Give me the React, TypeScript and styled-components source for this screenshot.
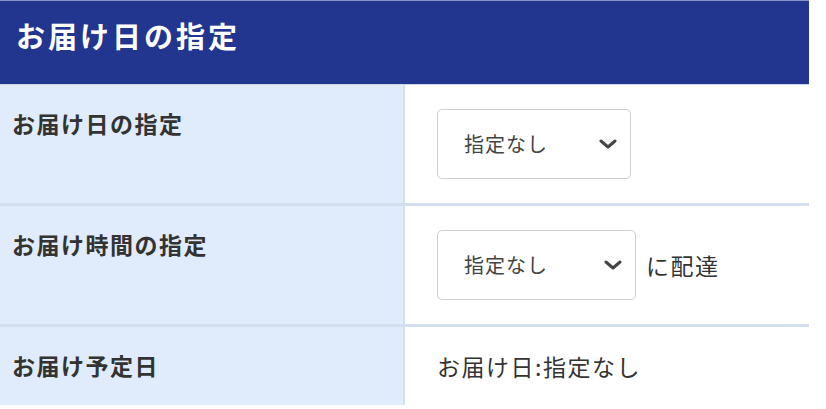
import React from 'react';
import styled, { createGlobalStyle } from 'styled-components';

const GlobalStyle = createGlobalStyle`
  body {
    margin: 0;
    background: #fff;
    font-family: "Noto Sans CJK JP", "Noto Sans", sans-serif;
    color: #333;
  }
`;

const Panel = styled.section`
  width: 809px;
`;

const Header = styled.h2`
  margin: 0;
  height: 84px;
  box-sizing: border-box;
  padding: 14px 16px 0;
  background: #22358f;
  border-top: 1px solid #8891c4;
  color: #fff;
  font-size: 29px;
  font-weight: 700;
  letter-spacing: 3px;
  line-height: 40px;
`;

const Row = styled.div<{ $first?: boolean }>`
  display: grid;
  grid-template-columns: 405px 1fr;
  border-top: ${(p) => (p.$first ? '1px solid #c9d6ee' : '3px solid #d3deef')};
`;

const Label = styled.div`
  background: #e0ecfb;
  border-right: 2px solid #d3deef;
  padding: 18px 12px;
  font-size: 23px;
  font-weight: 700;
  letter-spacing: 1.5px;
  line-height: 40px;
  color: #333;
`;

const Value = styled.div`
  display: flex;
  align-items: center;
  gap: 10px;
  padding: 24px 32px;
  min-height: 30px;
  line-height: 30px;
  font-size: 23px;
  letter-spacing: 1.5px;
  color: #333;
`;

const SelectBox = styled.div<{ $w: number }>`
  width: ${(p) => p.$w}px;
  height: 70px;
  box-sizing: border-box;
  border: 1px solid #cfcfcf;
  border-radius: 5px;
  display: flex;
  align-items: center;
  justify-content: space-between;
  padding: 0 12px 0 26px;
  font-size: 20px;
  letter-spacing: 1px;
  color: #444;
`;

const Chevron = () => (
  <svg width="20" height="10" viewBox="0 0 20 10">
    <path d="M3 2 L10 8 L17 2" fill="none" stroke="#444" strokeWidth="3" strokeLinecap="round" strokeLinejoin="round" />
  </svg>
);

const Select: React.FC<{ w: number }> = ({ w }) => (
  <SelectBox $w={w}>
    <span>指定なし</span>
    <Chevron />
  </SelectBox>
);

export default function App() {
  return (
    <>
      <GlobalStyle />
      <Panel>
        <Header>お届け日の指定</Header>
        <Row $first>
          <Label>お届け日の指定</Label>
          <Value>
            <Select w={194} />
          </Value>
        </Row>
        <Row>
          <Label>お届け時間の指定</Label>
          <Value>
            <Select w={199} />
            <span>に配達</span>
          </Value>
        </Row>
        <Row>
          <Label>お届け予定日</Label>
          <Value>お届け日:指定なし</Value>
        </Row>
      </Panel>
    </>
  );
}
